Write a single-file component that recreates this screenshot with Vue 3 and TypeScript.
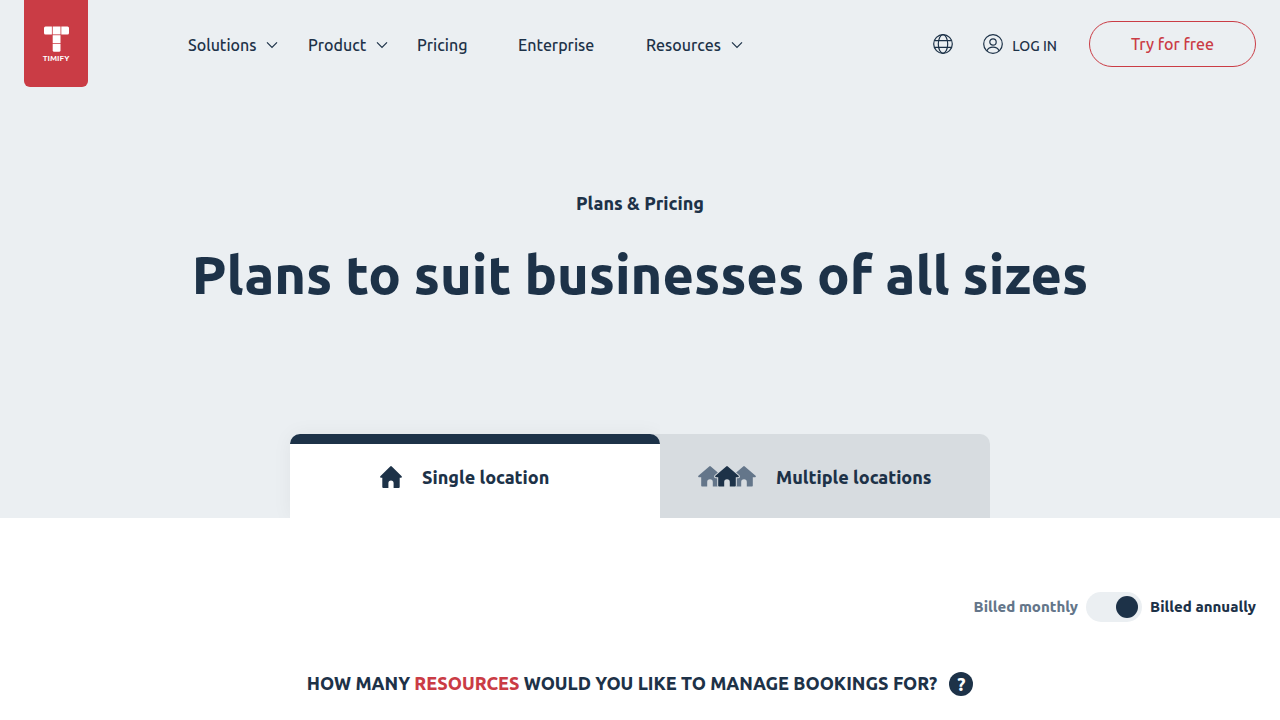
<script setup lang="ts">
import { ref } from 'vue'

interface NavItem {
  label: string
  menu: boolean
}

const navItems: NavItem[] = [
  { label: 'Solutions', menu: true },
  { label: 'Product', menu: true },
  { label: 'Pricing', menu: false },
  { label: 'Enterprise', menu: false },
  { label: 'Resources', menu: true },
]

const location = ref<'single' | 'multiple'>('single')
const annual = ref(true)
</script>

<template>
  <div class="page">
    <div class="hero">
      <header class="header">
        <a href="#" class="logo" aria-label="TIMIFY">
          <svg class="logo-mark" width="26" height="26" viewBox="0 0 26 26" aria-hidden="true">
            <path d="M2.5 .5 H8.9 V8.4 H2.5 Q1 8.4 1 6.9 V2 Q1 .5 2.5 .5 Z" />
            <rect x="9.7" y=".5" width="7.8" height="7.9" />
            <path d="M18.3 .5 H24.5 Q26 .5 26 2 V6.9 Q26 8.4 24.5 8.4 H18.3 Z" />
            <rect x="9.7" y="9.2" width="7.8" height="7.8" />
            <path d="M9.7 17.8 H17.5 V24.3 Q17.5 25.8 16 25.8 H11.2 Q9.7 25.8 9.7 24.3 Z" />
          </svg>
          <span class="logo-name">TIMIFY</span>
        </a>

        <nav class="nav">
          <a v-for="item in navItems" :key="item.label" href="#" class="nav-link">
            {{ item.label }}
            <svg v-if="item.menu" width="12" height="8" viewBox="0 0 12 8" aria-hidden="true">
              <path d="M1 1.3 L6 6.3 L11 1.3" />
            </svg>
          </a>
        </nav>

        <div class="actions">
          <button type="button" class="icon-button" aria-label="Language">
            <svg width="20" height="20" viewBox="0 0 20 20" aria-hidden="true">
              <circle cx="10" cy="10" r="9.3" />
              <ellipse cx="10" cy="10" rx="4.7" ry="9.3" />
              <path d="M1.4 6.7 H18.6 M1.4 13.3 H18.6" />
            </svg>
          </button>
          <a href="#" class="login">
            <svg width="20" height="20" viewBox="0 0 20 20" aria-hidden="true">
              <circle cx="10" cy="10" r="9.3" />
              <circle cx="10" cy="8" r="3.2" />
              <path d="M4 16.8 C5 14.3 7 13.2 10 13.2 C13 13.2 15 14.3 16 16.8" />
            </svg>
            <span>LOG IN</span>
          </a>
          <a href="#" class="cta">Try for free</a>
        </div>
      </header>

      <div class="intro">
        <p class="eyebrow">Plans &amp; Pricing</p>
        <h1 class="title">Plans to suit businesses of all sizes</h1>
      </div>

      <div class="tabs" role="tablist">
        <button
          type="button"
          role="tab"
          class="tab tab-single"
          :class="{ active: location === 'single' }"
          :aria-selected="location === 'single'"
          @click="location = 'single'"
        >
          <svg width="22" height="22" viewBox="0 0 22 22" aria-hidden="true">
            <path
              class="house"
              d="M10.2 .4 Q11 -.3 11.8 .4 L21.7 10.3 Q22.3 11.6 21 11.7 H19.7 V21 Q19.7 22 18.7 22 H13.6 V17.2 A2.6 2.6 0 0 0 8.4 17.2 V22 H3.3 Q2.3 22 2.3 21 V11.7 H1 Q-.3 11.6 .3 10.3 Z"
            />
          </svg>
          <span>Single location</span>
        </button>
        <button
          type="button"
          role="tab"
          class="tab tab-multiple"
          :class="{ active: location === 'multiple' }"
          :aria-selected="location === 'multiple'"
          @click="location = 'multiple'"
        >
          <svg width="58" height="22" viewBox="0 0 58 22" aria-hidden="true">
            <defs>
              <path
                id="small-house"
                d="M11.2 .4 Q12 -.3 12.8 .4 L23.6 9.8 Q24.4 11.1 23 11.3 H20.8 V19.8 Q20.8 20.6 20 20.6 H14.8 V16 A2.8 2.8 0 0 0 9.2 16 V20.6 H4 Q3.2 20.6 3.2 19.8 V11.3 H1 Q-.4 11.1 .4 9.8 Z"
              />
            </defs>
            <use href="#small-house" class="house-muted" />
            <use href="#small-house" class="house-muted" x="34" />
            <use href="#small-house" class="house-front" x="17" />
          </svg>
          <span>Multiple locations</span>
        </button>
      </div>
    </div>

    <main class="content">
      <div class="billing">
        <label for="billing-switch" class="billing-label" :class="{ chosen: !annual }">Billed monthly</label>
        <input id="billing-switch" v-model="annual" type="checkbox" role="switch" class="switch" />
        <label for="billing-switch" class="billing-label" :class="{ chosen: annual }">Billed annually</label>
      </div>

      <div class="question">
        <h2 class="question-text">
          HOW MANY <span class="accent">RESOURCES</span> WOULD YOU LIKE TO MANAGE BOOKINGS FOR?
        </h2>
        <button type="button" class="help" aria-label="Help">?</button>
      </div>
    </main>
  </div>
</template>

<style>
body {
  margin: 0;
  background: #fff;
}
</style>

<style scoped>
.page {
  color: #1d3248;
  font-family: Ubuntu, 'Noto Sans', 'Open Sans', sans-serif;
  font-size: 16px;
  line-height: 24px;
}

.page * {
  box-sizing: border-box;
}

button {
  border: 0;
  background: none;
  padding: 0;
  color: inherit;
  font: inherit;
  cursor: pointer;
}

a {
  color: inherit;
  text-decoration: none;
}

svg {
  flex: none;
  display: block;
}

.hero {
  background: #ebeff2;
}

.header {
  display: flex;
  align-items: flex-start;
  padding: 0 24px;
}

.logo {
  display: flex;
  flex-direction: column;
  align-items: center;
  width: 64px;
  height: 87px;
  padding-top: 26px;
  border-radius: 0 0 6px 6px;
  background: #ca3c45;
  color: #fff;
}

.logo-mark {
  fill: #fff;
}

.logo-name {
  font-size: 8px;
  font-weight: 700;
  line-height: 14px;
}

.nav {
  display: grid;
  grid-template-columns: 120px 109px 101px 128px auto;
  margin: 33px 0 0 100px;
}

.nav-link {
  display: flex;
  align-items: center;
  gap: 10px;
  font-size: 16px;
  font-weight: 500;
  white-space: nowrap;
}

.nav-link svg,
.icon-button svg,
.login svg {
  fill: none;
  stroke: #1d3248;
  stroke-width: 1.2;
}

.actions {
  display: flex;
  align-items: center;
  margin: 21px 0 0 auto;
}

.icon-button {
  margin-right: 30px;
}

.login {
  display: flex;
  align-items: center;
  gap: 9px;
  margin-right: 32px;
  font-size: 14px;
  font-weight: 500;
  line-height: 20px;
}

.login span {
  padding-top: 4px;
}

.cta {
  width: 167px;
  border: 1px solid #ca3c45;
  border-radius: 23px;
  color: #ca3c45;
  font-size: 16px;
  font-weight: 500;
  line-height: 44px;
  text-align: center;
}

.intro {
  padding: 104px 24px 124px;
  text-align: center;
}

.eyebrow {
  margin: 0;
  font-size: 18px;
  font-weight: 800;
}

.title {
  margin: 24px 0 0;
  font-size: 54px;
  font-weight: 800;
  line-height: 71px;
}

.tabs {
  display: flex;
  max-width: 700px;
  margin: 0 auto;
}

.tab {
  display: flex;
  align-items: center;
  gap: 20px;
  height: 84px;
  border-radius: 10px 10px 0 0;
  background: #d7dce0;
  font-size: 18px;
  font-weight: 800;
  white-space: nowrap;
}

.tab.active {
  position: relative;
  background: linear-gradient(#1d3248 10px, #fff 10px);
  box-shadow: 0 0 20px rgba(0, 0, 0, 0.05);
  clip-path: inset(-20px 0 0 -20px);
}

.tab-single {
  flex: 1 1 370px;
  padding: 2px 0 0 90px;
}

.tab-multiple {
  flex: 1 1 350px;
  margin-left: -20px;
  padding: 2px 0 0 58px;
}

.house,
.house-front {
  fill: #1d3248;
}

.house-front {
  stroke: #d7dce0;
  stroke-width: 2;
  paint-order: stroke;
}

.house-muted {
  fill: #64768a;
}

.content {
  padding: 74px 24px 24px;
}

.billing {
  display: flex;
  align-items: center;
  justify-content: flex-end;
  gap: 8px;
}

.billing-label {
  color: #64768a;
  font-size: 15px;
  font-weight: 800;
}

.billing-label.chosen {
  color: #1d3248;
}

.switch {
  appearance: none;
  display: flex;
  align-items: center;
  width: 56px;
  height: 30px;
  margin: 0;
  padding: 4px;
  border-radius: 15px;
  background: #ebeff2;
  cursor: pointer;
}

.switch::before {
  content: '';
  width: 22px;
  height: 22px;
  border-radius: 50%;
  background: #1d3248;
}

.switch:checked {
  justify-content: flex-end;
}

.question {
  display: flex;
  align-items: flex-start;
  justify-content: center;
  gap: 12px;
  margin-top: 50px;
}

.question-text {
  margin: 0;
  font-size: 18px;
  font-weight: 800;
  line-height: 22px;
}

.accent {
  color: #ca3c45;
}

.help {
  width: 24px;
  height: 24px;
  border-radius: 50%;
  background: #1d3248;
  color: #fff;
  font-size: 18px;
  font-weight: 800;
  line-height: 22px;
}
</style>
